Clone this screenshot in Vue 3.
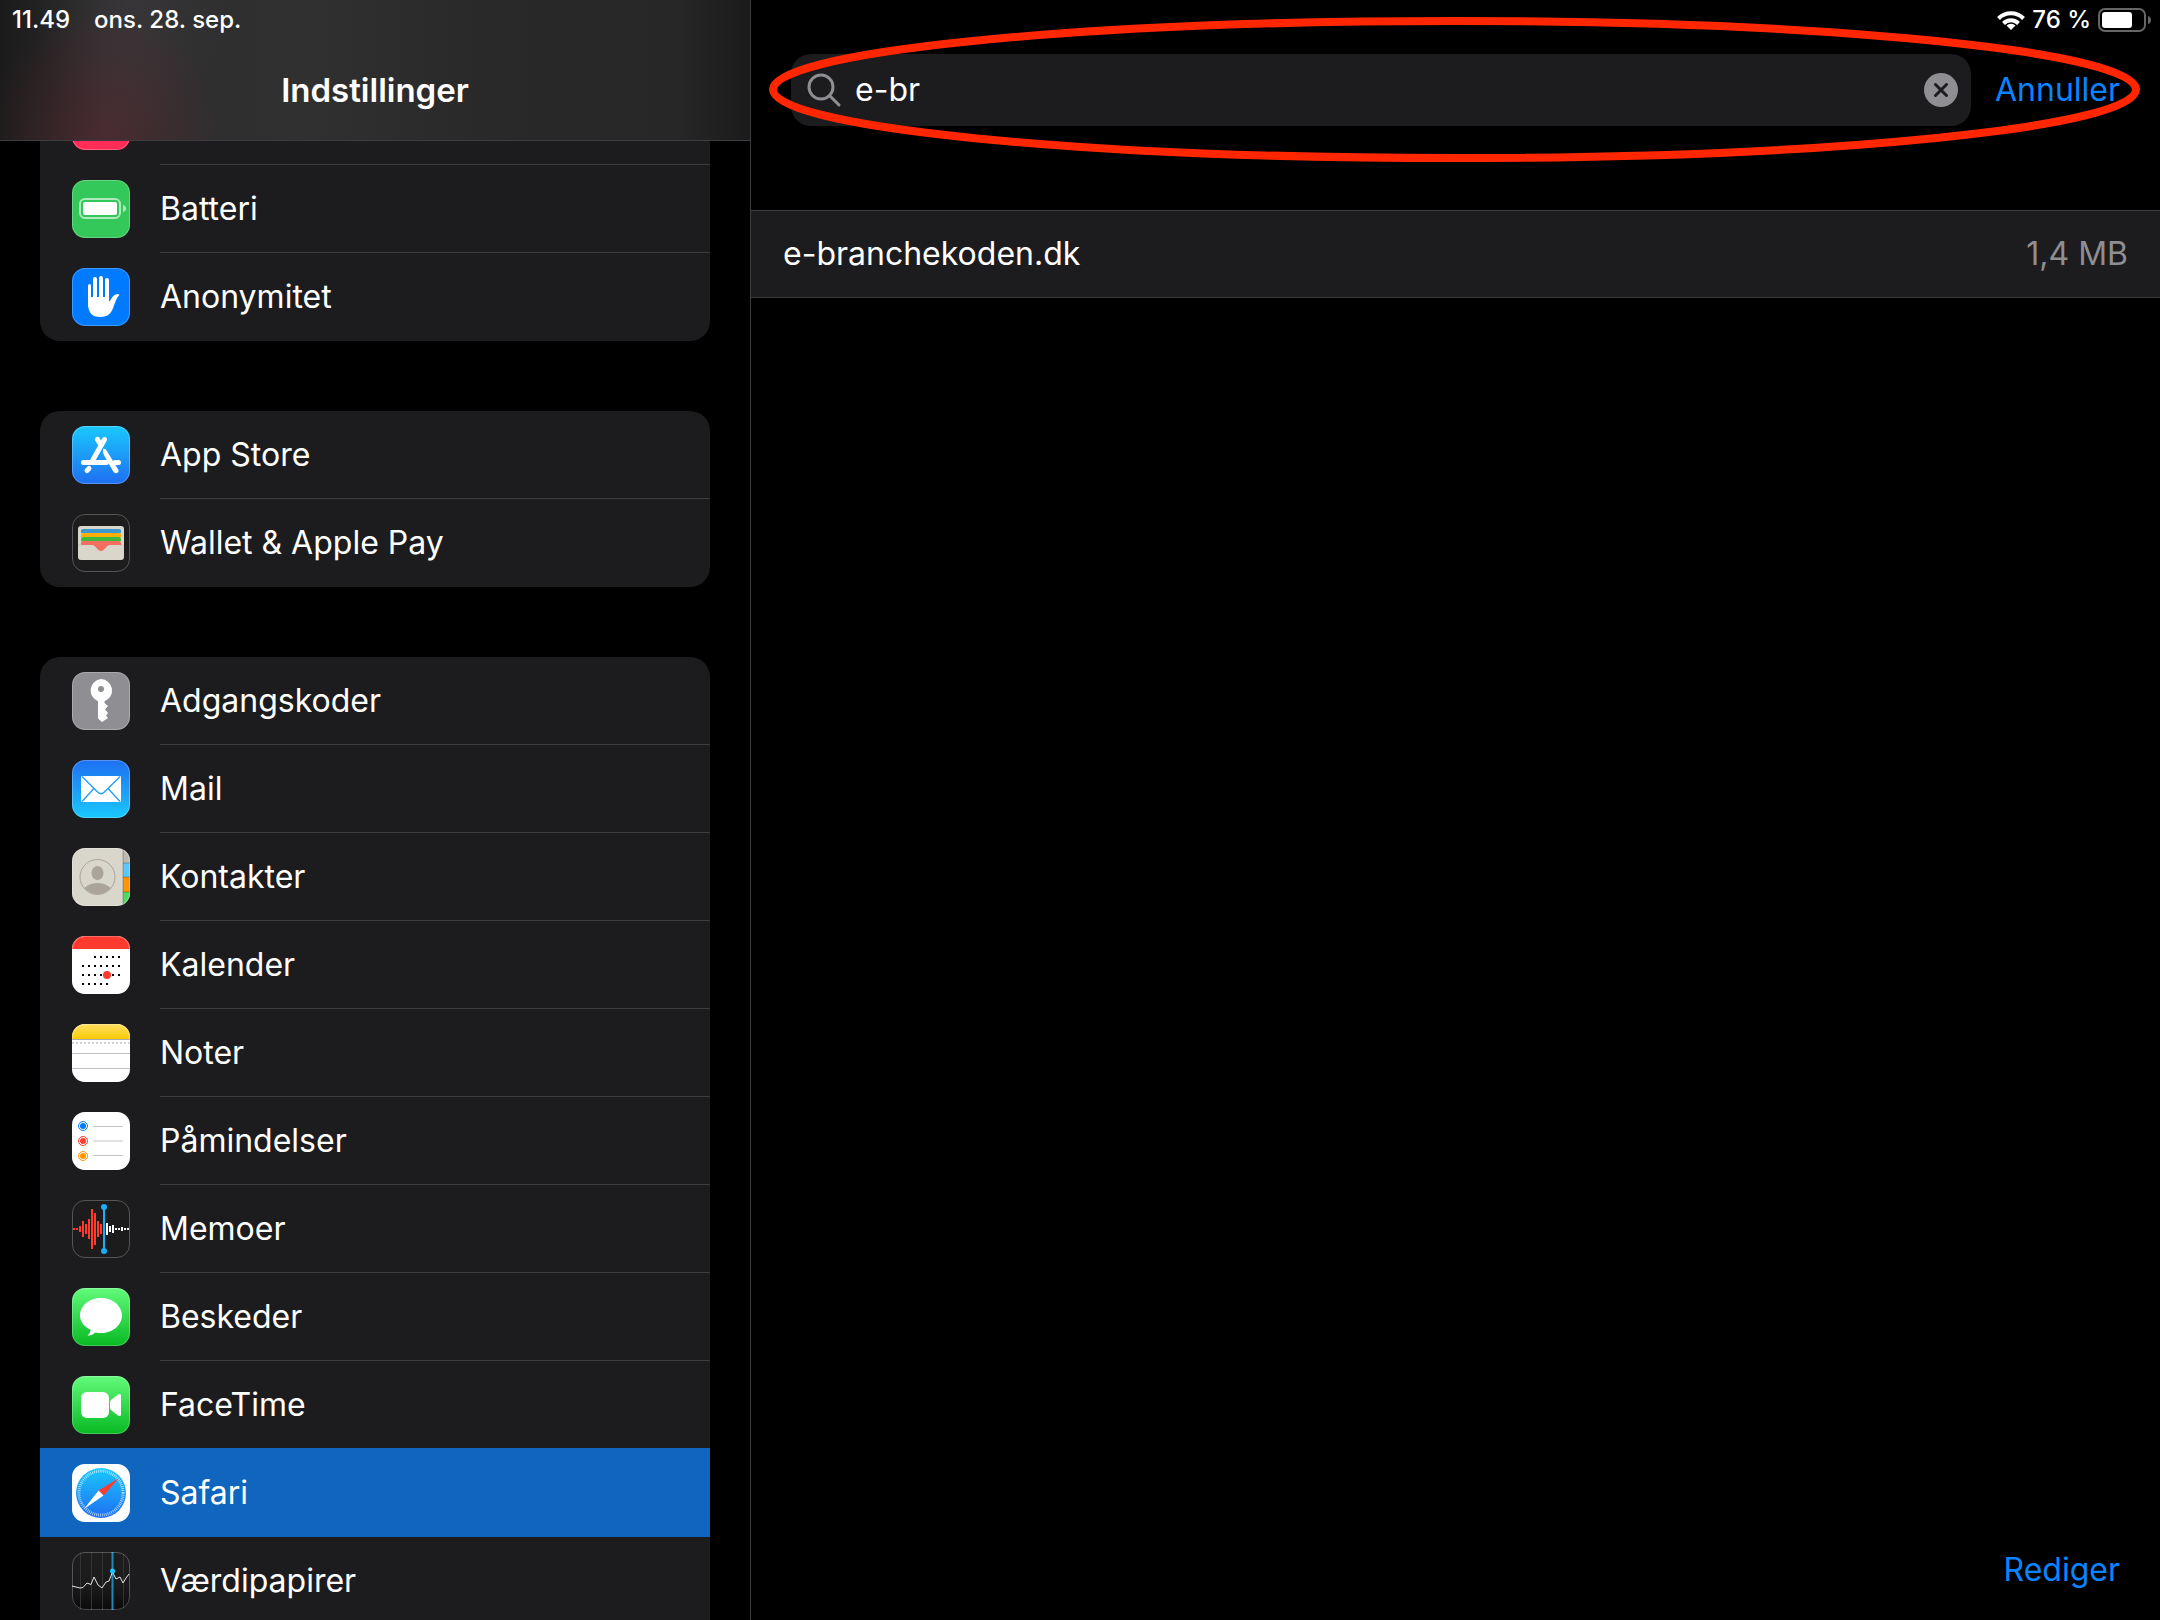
<script setup>
import { computed, ref } from 'vue'

const query = ref('e-br')
const selected = ref('safari')

const groups = [
  {
    name: 'device',
    rows: [
      { icon: 'touchid', label: '' },
      { icon: 'battery', label: 'Batteri' },
      { icon: 'privacy', label: 'Anonymitet' },
    ],
  },
  {
    name: 'store',
    rows: [
      { icon: 'appstore', label: 'App Store' },
      { icon: 'wallet', label: 'Wallet & Apple Pay' },
    ],
  },
  {
    name: 'apps',
    rows: [
      { icon: 'passwords', label: 'Adgangskoder' },
      { icon: 'mail', label: 'Mail' },
      { icon: 'contacts', label: 'Kontakter' },
      { icon: 'calendar', label: 'Kalender' },
      { icon: 'notes', label: 'Noter' },
      { icon: 'reminders', label: 'Påmindelser' },
      { icon: 'memos', label: 'Memoer' },
      { icon: 'messages', label: 'Beskeder' },
      { icon: 'facetime', label: 'FaceTime' },
      { icon: 'safari', label: 'Safari' },
      { icon: 'stocks', label: 'Værdipapirer' },
    ],
  },
]

const sites = [{ domain: 'e-branchekoden.dk', size: '1,4 MB' }]
const results = computed(() => sites.filter((site) => site.domain.includes(query.value)))

// Dots of the calendar icon: [first column, last column] for each week.
const weeks = [[2, 6], [0, 6], [0, 6], [0, 4]]
const calendarDots = weeks.flatMap(([from, to], week) => {
  const dots = []
  for (let day = from; day <= to; day++) {
    dots.push({ x: 10 + day * 6, y: 20 + week * 9 })
  }
  return dots
})

// Half heights of the voice memo bars, left and right of the playhead.
const redBars = [1, 1, 3, 8, 5, 10, 20, 16, 8, 5]
const whiteBars = [6, 3, 4, 1, 1, 2, 1, 1]
</script>

<template>
  <div class="settings">
    <svg class="defs" aria-hidden="true">
      <defs>
        <linearGradient id="blue-down" x1="0" y1="0" x2="0" y2="1">
          <stop offset="0" stop-color="#1ac8fd" />
          <stop offset="1" stop-color="#1e6ff2" />
        </linearGradient>
        <linearGradient id="blue-up" x1="0" y1="0" x2="0" y2="1">
          <stop offset="0" stop-color="#1e6ff2" />
          <stop offset="1" stop-color="#1ac8fd" />
        </linearGradient>
        <linearGradient id="green-down" x1="0" y1="0" x2="0" y2="1">
          <stop offset="0" stop-color="#61fb7a" />
          <stop offset="1" stop-color="#08b923" />
        </linearGradient>
        <linearGradient id="yellow-down" x1="0" y1="0" x2="0" y2="1">
          <stop offset="0" stop-color="#ffdf62" />
          <stop offset="1" stop-color="#ffcb05" />
        </linearGradient>
        <linearGradient id="black-down" x1="0" y1="0" x2="0" y2="1">
          <stop offset="0" stop-color="#1e1e1e" />
          <stop offset="0.6" stop-color="#1a1a1a" />
          <stop offset="1" stop-color="#0a0a0a" />
        </linearGradient>
        <clipPath id="tile">
          <rect width="58" height="58" rx="13" />
        </clipPath>
        <clipPath id="portrait">
          <circle cx="25.5" cy="29" r="17" />
        </clipPath>
      </defs>
    </svg>

    <aside class="sidebar">
      <header class="sidebar-header">
        <div class="status">
          <time>11.49</time>
          <span>ons. 28. sep.</span>
        </div>
        <h1>Indstillinger</h1>
      </header>

      <nav class="list">
        <ul v-for="group in groups" :key="group.name" class="group">
          <li v-for="row in group.rows" :key="row.icon">
            <button
              type="button"
              class="row"
              :class="{ selected: row.icon === selected }"
              @click="selected = row.icon"
            >
              <svg class="icon" viewBox="0 0 58 58" aria-hidden="true">
                <g clip-path="url(#tile)">
                  <rect v-if="row.icon === 'touchid'" width="58" height="58" fill="#ff2d55" />

                  <g v-else-if="row.icon === 'battery'">
                    <rect width="58" height="58" fill="#34c759" />
                    <rect x="8" y="19" width="40" height="19" rx="5" fill="none" stroke="#fff" stroke-width="2" opacity="0.6" />
                    <rect x="11" y="22" width="34" height="13" rx="2" fill="#fff" />
                    <path d="M51 25q3 1 3 3.500t-3 3.500z" fill="#fff" opacity="0.6" />
                  </g>

                  <g v-else-if="row.icon === 'privacy'">
                    <rect width="58" height="58" fill="#007aff" />
                    <path
                      d="M16 17.500a1.500 1.500 0 0 1 3 0V29h2V11a2 2 0 0 1 4 0v18h2V10a2 2 0 0 1 4 0v19h2V12a2 2 0 0 1 4 0v21.500q.8-.2 1.500-1.500c2-4 4.500-6 7-6q2.500 0 1.500 1.500c-2.500 2.500-3.500 6-5 10C39.500 45.500 36 49 28.500 49 20 49 16 44.500 16 36z"
                      fill="#fff"
                    />
                  </g>

                  <g v-else-if="row.icon === 'appstore'">
                    <rect width="58" height="58" fill="url(#blue-down)" />
                    <g stroke="#fff" stroke-width="5" stroke-linecap="round">
                      <path d="M32.500 13.500 20 35.500M25.500 13.500l3 5M17 42.500l-2 2M11.500 36.500h23M43 36.500h3.500" fill="none" />
                    </g>
                    <path d="m31.500 22.500 2.500 1L46.500 44q.5 2.500-1.500 3t-3.500-1L32.500 30q-2.500-4-1-7.500z" fill="#fff" />
                  </g>

                  <g v-else-if="row.icon === 'wallet'">
                    <rect width="58" height="58" fill="#1d1d1d" />
                    <rect x="6" y="12" width="46" height="34" rx="3" fill="#d9d6cc" />
                    <path d="M9 19v-2q0-2 2-2h36q2 0 2 2v2z" fill="#3c99d1" />
                    <path d="M9 23v-2q0-2 2-2h36q2 0 2 2v2z" fill="#ffae03" />
                    <path d="M9 27v-2q0-2 2-2h36q2 0 2 2v2z" fill="#41b83c" />
                    <path d="M9 31v-2q0-2 2-2h36q2 0 2 2v2H38c-4 0-5 6-9 6s-5-6-9-6z" fill="#f26e60" />
                    <path d="M6 31h3M49 31h3" stroke="#c4c1b8" />
                  </g>

                  <g v-else-if="row.icon === 'passwords'">
                    <rect width="58" height="58" fill="#8e8e93" />
                    <path
                      fill-rule="evenodd"
                      d="M29 7a11.500 11.500 0 0 1 3.500 22.300V31l3.500 3-3 3.500 3 3.500-2 2.500 2 2.500-6 4-4-3.500V29.200A11.500 11.500 0 0 1 29 7zm0 7a3 3 0 1 0 0 6 3 3 0 0 0 0-6z"
                      fill="#fff"
                    />
                  </g>

                  <g v-else-if="row.icon === 'mail'">
                    <rect width="58" height="58" fill="url(#blue-up)" />
                    <rect x="9" y="16" width="40" height="26" rx="1" fill="#fff" />
                    <path
                      d="m10 16.500 15 15q4 4.500 8 0l15-15M10 41.500 21.500 29M48 41.500 36.500 29"
                      fill="none"
                      stroke="#1e9df8"
                      stroke-width="1.300"
                    />
                  </g>

                  <g v-else-if="row.icon === 'contacts'">
                    <rect width="58" height="58" fill="#d9d6cc" />
                    <rect x="51" width="7" height="15" fill="#bdb9b0" />
                    <rect x="51" y="15" width="7" height="14" fill="#5ac8fa" />
                    <rect x="51" y="29" width="7" height="15" fill="#ff9500" />
                    <rect x="51" y="44" width="7" height="14" fill="#4cd964" />
                    <path d="M51 15h7M51 29h7M51 44h7M51 0v58" stroke="#000" stroke-opacity="0.25" />
                    <g fill="#aaa49b">
                      <ellipse cx="25.500" cy="25" rx="6" ry="7" />
                      <ellipse cx="25.500" cy="45" rx="15" ry="10" clip-path="url(#portrait)" />
                    </g>
                    <circle cx="25.500" cy="29" r="17.500" fill="none" stroke="#aaa49b" />
                  </g>

                  <g v-else-if="row.icon === 'calendar'">
                    <rect width="58" height="58" fill="#fff" />
                    <rect width="58" height="13" fill="#ff3b30" />
                    <rect v-for="dot in calendarDots" :key="`${dot.x}-${dot.y}`" :x="dot.x" :y="dot.y" width="2" height="2" />
                    <circle cx="35" cy="39" r="4" fill="#ff3b30" />
                  </g>

                  <g v-else-if="row.icon === 'notes'">
                    <rect width="58" height="58" fill="#fff" />
                    <rect width="58" height="15" fill="url(#yellow-down)" />
                    <path d="M0 15.500h58" stroke="#a9a9ae" />
                    <path d="M0 19h58" stroke="#d0d0d3" stroke-width="2" stroke-dasharray="2 2" />
                    <path d="M0 29.500h58M0 44.500h58" stroke="#c0c0c5" />
                  </g>

                  <g v-else-if="row.icon === 'reminders'">
                    <rect width="58" height="58" fill="#fff" />
                    <g v-for="(color, i) in ['#007aff', '#ff3b30', '#ff9500']" :key="color">
                      <circle cx="11" :cy="14 + i * 15" r="4.500" fill="none" :stroke="color" />
                      <circle cx="11" :cy="14 + i * 15" r="3" :fill="color" />
                      <path :d="`M21 ${14.5 + i * 14.5}h30`" stroke="#c4c4c7" />
                    </g>
                  </g>

                  <g v-else-if="row.icon === 'memos'">
                    <rect width="58" height="58" fill="#1c1c1c" />
                    <rect v-for="(h, i) in redBars" :key="`r${i}`" :x="1 + i * 3" :y="29 - h" width="2" :height="h * 2" fill="#ff3b30" />
                    <rect v-for="(h, i) in whiteBars" :key="`w${i}`" :x="34 + i * 3" :y="29 - h" width="2" :height="h * 2" fill="#fff" />
                    <path d="M32 7v44" stroke="#1badf8" stroke-width="2" />
                    <circle cx="32" cy="7" r="3" fill="#1badf8" />
                    <circle cx="32" cy="51" r="3" fill="#1badf8" />
                  </g>

                  <g v-else-if="row.icon === 'messages'">
                    <rect width="58" height="58" fill="url(#green-down)" />
                    <path d="M29 10c11.600 0 21 7.800 21 17.500S40.600 45 29 45q-3 0-5.500-.6-3.500 3.300-8 3.400 3-3 3.200-6C12 38.500 8 33.500 8 27.500 8 17.800 17.400 10 29 10z" fill="#fff" />
                  </g>

                  <g v-else-if="row.icon === 'facetime'">
                    <rect width="58" height="58" fill="url(#green-down)" />
                    <rect x="9" y="16" width="28" height="26" rx="6" fill="#fff" />
                    <path d="M38 26.500q0-1.500 1-2.500l7-5.500q3-1.500 3 1v19q0 2.500-3 1L39 34q-1-1-1-2.500z" fill="#fff" />
                  </g>

                  <g v-else-if="row.icon === 'safari'">
                    <rect width="58" height="58" fill="#fff" />
                    <circle cx="29" cy="29" r="25" fill="url(#blue-down)" />
                    <circle cx="29" cy="29" r="22" fill="none" stroke="#fff" stroke-width="3" stroke-dasharray="0.700 1.220" opacity="0.800" />
                    <path d="M47 14 31.500 31.500 26.500 26.500z" fill="#ff3b30" />
                    <path d="M12 45 26.500 26.500 31.500 31.500z" fill="#fff" />
                  </g>

                  <g v-else-if="row.icon === 'stocks'">
                    <rect width="58" height="58" fill="url(#black-down)" />
                    <path d="M8.500 0v58M19.500 0v58M30.500 0v58M51.500 0v58" stroke="#333" />
                    <path d="M40.500 0v58" stroke="#1e88b8" stroke-width="2" />
                    <path
                      d="m0 34 8 2 3-.5 4-4.500 4 1.500 3-7.500 4 8 4 3 4-6 3-1 3.500-9 3.500 7 4-2 3 6 3-5 3-4"
                      fill="none"
                      stroke="#e4e4e4"
                      stroke-linejoin="round"
                    />
                    <circle cx="40.500" cy="19" r="2.500" fill="#1ac8fd" />
                  </g>
                </g>
                <rect x="0.500" y="0.500" width="57" height="57" rx="12.500" fill="none" stroke="#fff" stroke-opacity="0.250" />
              </svg>
              <span class="label">{{ row.label }}</span>
            </button>
          </li>
        </ul>
      </nav>
    </aside>

    <main class="detail">
      <div class="status status-right">
        <svg class="wifi" viewBox="0 0 28 20" aria-hidden="true">
          <g fill="none" stroke="#fff" stroke-width="4">
            <path d="M1.500 8.500a17.500 17.500 0 0 1 25 0" />
            <path d="M6.500 13.500a10.500 10.500 0 0 1 15 0" />
          </g>
          <path d="M14 20l-4.500-4.500a6.500 6.500 0 0 1 9 0z" fill="#fff" />
        </svg>
        <span>76 %</span>
        <svg class="charge" viewBox="0 0 54 24" aria-hidden="true">
          <rect x="1" y="1" width="46" height="22" rx="6" fill="none" stroke="#666" stroke-width="2" />
          <rect x="4" y="4" width="30" height="16" rx="3" fill="#fff" />
          <path d="M50 8q3 1 3 4t-3 4z" fill="#666" />
        </svg>
      </div>

      <form class="search" role="search" @submit.prevent>
        <div class="field">
          <svg class="glass" viewBox="0 0 34 34" aria-hidden="true">
            <g fill="none" stroke="#8e8e93" stroke-width="3" stroke-linecap="round">
              <circle cx="14" cy="14" r="12" />
              <path d="m23 23 9 9" />
            </g>
          </svg>
          <input v-model="query" type="text" aria-label="Søg">
          <button type="button" class="clear" aria-label="Ryd" @click="query = ''">
            <svg viewBox="0 0 34 34" aria-hidden="true">
              <circle cx="17" cy="17" r="17" fill="#8e8e93" />
              <path d="m11.500 11.500 11 11M22.500 11.500l-11 11" stroke="#1c1c1e" stroke-width="3" stroke-linecap="round" />
            </svg>
          </button>
        </div>
        <button type="button" class="link" @click="query = ''">Annuller</button>
        <svg class="marker" aria-hidden="true">
          <ellipse cx="50%" cy="50%" rx="50%" ry="50%" />
        </svg>
      </form>

      <ul class="results">
        <li v-for="site in results" :key="site.domain">
          <span>{{ site.domain }}</span>
          <span class="size">{{ site.size }}</span>
        </li>
      </ul>

      <footer>
        <button type="button" class="link">Rediger</button>
      </footer>
    </main>
  </div>
</template>

<style>
body {
  margin: 0;
  background: #000;
}
</style>

<style scoped>
.settings {
  display: grid;
  grid-template-columns: 25fr 47fr;
  height: 100vh;
  overflow: hidden;
  background: #000;
  color: #fff;
  font-family: Inter, "Liberation Sans", sans-serif;
  font-size: 32px;
  line-height: 40px;
}

.defs {
  position: absolute;
  width: 0;
  height: 0;
}

button,
input {
  margin: 0;
  padding: 0;
  border: 0;
  background: none;
  color: inherit;
  font: inherit;
  text-align: left;
}

ul {
  margin: 0;
  padding: 0;
  list-style: none;
}

.sidebar {
  display: flex;
  flex-direction: column;
  min-width: 0;
  min-height: 0;
}

.sidebar-header {
  position: relative;
  z-index: 1;
  flex: none;
  height: 140px;
  border-bottom: 1px solid #3d3d41;
  background:
    radial-gradient(ellipse 120px 130px at 104px 100%, rgba(120, 42, 56, 0.4), transparent),
    radial-gradient(ellipse 100px 140px at 130px 0, rgba(90, 80, 90, 0.25), transparent),
    linear-gradient(90deg, #1b1b1b, #2c2c2c 14%, #303031 40%, #282828 70%, #272727 90%, #1b1b1b);
}

.status {
  display: flex;
  align-items: center;
  gap: 24px;
  height: 40px;
  padding: 0 12px;
  font-size: 24px;
  font-weight: 500;
}

h1 {
  margin: 0;
  padding: 30px 0;
  font-size: 33px;
  font-weight: 600;
  line-height: 40px;
  text-align: center;
}

/* The first row is scrolled halfway under the header. */
.list {
  flex: 1;
  min-height: 0;
  margin-top: -64px;
  padding: 0 40px;
  overflow-y: auto;
  scrollbar-width: none;
}

.group {
  margin-bottom: 70px;
  border-radius: 20px;
  background: #1c1c1e;
  overflow: hidden;
}

.group:last-child {
  margin-bottom: 0;
  border-radius: 20px 20px 0 0;
}

.row {
  display: flex;
  align-items: center;
  box-sizing: border-box;
  width: 100%;
  height: 88px;
  padding-left: 32px;
}

.icon {
  flex: none;
  width: 58px;
  height: 58px;
}

.label {
  flex: 1;
  box-sizing: border-box;
  height: 88px;
  margin-left: 30px;
  border-bottom: 1px solid #3d3d41;
  line-height: 88px;
}

li:last-child .label,
.selected .label {
  border-bottom-color: transparent;
}

/* Covers the separator of the row above. */
.selected {
  position: relative;
  height: 89px;
  margin-top: -1px;
  padding-top: 1px;
  background: #1065be;
}

.detail {
  display: flex;
  flex-direction: column;
  min-width: 0;
  border-left: 1px solid #3d3d41;
}

.status-right {
  justify-content: flex-end;
  gap: 7px;
  padding: 0 8px;
}

.wifi {
  width: 28px;
  height: 20px;
}

.charge {
  width: 54px;
  height: 24px;
}

.search {
  position: relative;
  display: flex;
  align-items: center;
  gap: 24px;
  height: 100px;
  padding: 0 40px;
}

.field {
  display: flex;
  flex: 1;
  align-items: center;
  gap: 14px;
  height: 72px;
  padding: 0 13px 0 16px;
  border-radius: 20px;
  background: #1c1c1e;
}

.glass {
  width: 34px;
  height: 34px;
}

.field input {
  flex: 1;
  min-width: 0;
  outline: none;
}

.clear,
.clear svg {
  display: block;
  width: 34px;
  height: 34px;
}

.link {
  color: #0a84ff;
}

/* Hand-drawn ring round the search field. */
.marker {
  position: absolute;
  top: -19px;
  left: 22px;
  width: calc(100% - 46px);
  height: 137px;
  overflow: visible;
  pointer-events: none;
}

.marker ellipse {
  fill: none;
  stroke: #ff2600;
  stroke-width: 8px;
}

.results {
  margin-top: 70px;
}

.results li {
  display: flex;
  align-items: center;
  justify-content: space-between;
  height: 86px;
  padding: 0 32px;
  border: solid #3d3d41;
  border-width: 1px 0;
  background: #1c1c1e;
}

.size {
  color: #8e8e93;
}

footer {
  display: flex;
  justify-content: flex-end;
  margin-top: auto;
  padding: 30px 40px;
}
</style>
